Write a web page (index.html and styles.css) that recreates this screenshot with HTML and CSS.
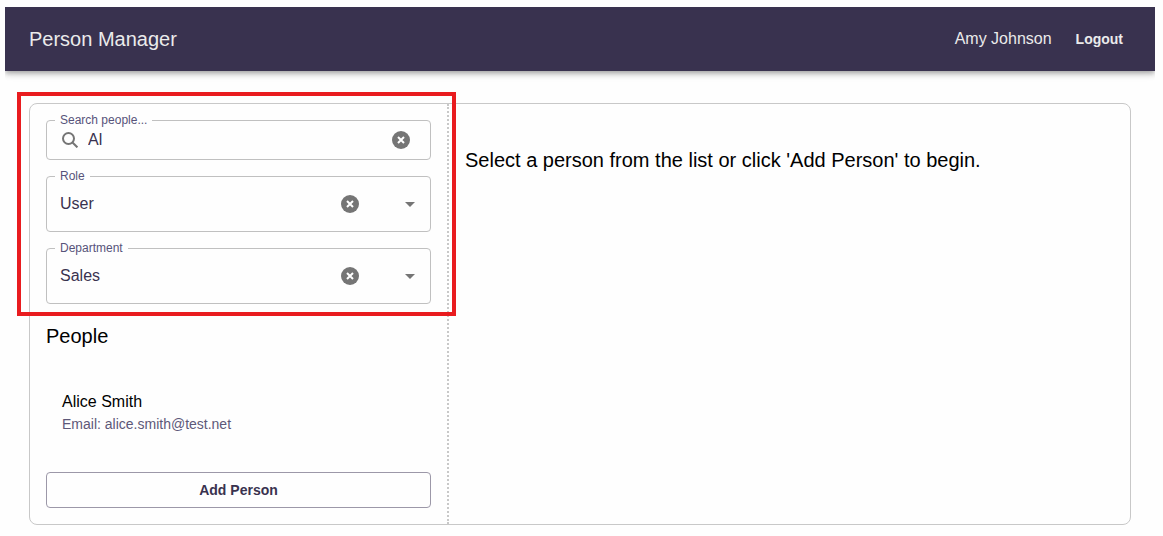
FILE: index.html
```html
<!DOCTYPE html>
<html lang="en">
<head>
<meta charset="utf-8">
<title>Person Manager</title>
<link rel="stylesheet" href="styles.css">
</head>
<body>
<header class="app-bar">
  <h1 class="app-title">Person Manager</h1>
  <span class="user-name">Amy Johnson</span>
  <button class="logout" type="button">Logout</button>
</header>
<main class="content">
  <div class="panel">
    <section class="sidebar">
      <form class="filters">
        <fieldset class="field">
          <legend class="field-legend"><label for="search">Search people...</label></legend>
          <div class="field-row search-row">
            <svg class="search-icon" viewBox="0 0 16 16" aria-hidden="true"><circle cx="6.5" cy="6.5" r="5.5"/><path d="M10.5 10.5l4.9 4.9"/></svg>
            <input class="control" id="search" type="text" value="Al">
            <button class="clear" type="button" aria-label="Clear search"><svg viewBox="0 0 18 18"><circle cx="9" cy="9" r="9"/><path class="cross" d="M6 6l6 6M12 6l-6 6"/></svg></button>
          </div>
        </fieldset>
        <fieldset class="field">
          <legend class="field-legend"><label for="role">Role</label></legend>
          <div class="field-row select-row">
            <select class="control" id="role"><option>User</option><option>Admin</option></select>
            <button class="clear" type="button" aria-label="Clear role"><svg viewBox="0 0 18 18"><circle cx="9" cy="9" r="9"/><path class="cross" d="M6 6l6 6M12 6l-6 6"/></svg></button>
            <svg class="arrow" viewBox="0 0 10 5" aria-hidden="true"><path d="M0 0h10L5 5z"/></svg>
          </div>
        </fieldset>
        <fieldset class="field">
          <legend class="field-legend"><label for="department">Department</label></legend>
          <div class="field-row select-row">
            <select class="control" id="department"><option>Sales</option><option>Support</option></select>
            <button class="clear" type="button" aria-label="Clear department"><svg viewBox="0 0 18 18"><circle cx="9" cy="9" r="9"/><path class="cross" d="M6 6l6 6M12 6l-6 6"/></svg></button>
            <svg class="arrow" viewBox="0 0 10 5" aria-hidden="true"><path d="M0 0h10L5 5z"/></svg>
          </div>
        </fieldset>
        <div class="highlight"></div>
      </form>
      <h2 class="people-title">People</h2>
      <ul class="people">
        <li class="person">
          <span class="person-name">Alice Smith</span>
          <span class="person-email">Email: alice.smith@test.net</span>
        </li>
      </ul>
      <button class="add-person" type="button">Add Person</button>
    </section>
    <section class="detail">
      <p class="prompt">Select a person from the list or click 'Add Person' to begin.</p>
    </section>
  </div>
</main>
</body>
</html>
```
FILE: styles.css
```css
* {
  box-sizing: border-box;
}

body {
  margin: 7px 8px 0 5px;
  background: #fefefe;
  color: #000;
  font-family: "Liberation Sans", Arial, sans-serif;
  font-size: 16px;
  line-height: 24px;
}

button,
input,
select {
  font: inherit;
}

.app-bar {
  display: flex;
  align-items: center;
  gap: 16px;
  min-height: 64px;
  padding: 0 24px;
  background: #39324f;
  color: #ebebeb;
  box-shadow: 0 2px 4px -1px rgba(0, 0, 0, 0.2), 0 4px 5px 0 rgba(0, 0, 0, 0.14), 0 1px 10px 0 rgba(0, 0, 0, 0.12);
}

.app-title {
  flex: 1;
  margin: 0;
  font-size: 20px;
  font-weight: 400;
  line-height: 32px;
}

.logout {
  padding: 6px 8px;
  border: 0;
  background: none;
  color: inherit;
  font-size: 14px;
  font-weight: 700;
}

.content {
  padding: 32px 24px 0;
}

.panel {
  display: grid;
  grid-template-columns: 419fr 681fr;
  border: 1px solid #c8c8c8;
  border-radius: 8px;
}

.sidebar {
  padding: 8px 16px 16px;
  border-right: 2px dotted #c8c8c8;
}

.filters {
  position: relative;
  display: flex;
  flex-direction: column;
  gap: 8px;
}

.highlight {
  position: absolute;
  inset: -20px -25px -12px -29px;
  border: 4px solid #e91c1f;
  pointer-events: none;
}

.field {
  min-width: 0;
  margin: 0;
  padding: 0 13px 0 8px;
  border: 1px solid #c0c0c0;
  border-radius: 4px;
}

.field-legend {
  padding: 0 5px;
  color: #57537a;
  font-size: 12px;
  line-height: 16px;
}

.field-row {
  display: flex;
  align-items: center;
}

.search-row {
  padding: 0 7px 7px;
}

.select-row {
  padding: 8px 2px 15px 5px;
}

.search-icon {
  width: 16px;
  height: 16px;
  margin-right: 10px;
  fill: none;
  stroke: #757575;
  stroke-width: 2;
}

.control {
  flex: 1;
  min-width: 0;
  height: 24px;
  padding: 0;
  border: 0;
  outline: 0;
  appearance: none;
  background: none;
  color: #39324f;
}

.clear {
  display: flex;
  padding: 0;
  border: 0;
  background: none;
}

.clear svg {
  width: 18px;
  height: 18px;
  fill: #757575;
}

.clear .cross {
  stroke: #fff;
  stroke-width: 2;
}

.arrow {
  width: 10px;
  height: 5px;
  margin-left: 46px;
  fill: #757575;
}

.people-title {
  margin: 16px 0;
  font-size: 20px;
  font-weight: 400;
  line-height: 32px;
}

.people {
  margin: 0 0 16px;
  padding: 8px 0;
  list-style: none;
}

.person {
  display: flex;
  flex-direction: column;
  padding: 14px 16px;
}

.person-email {
  color: #5d5879;
  font-size: 14px;
  line-height: 20px;
}

.add-person {
  display: block;
  width: 100%;
  padding: 5px 16px;
  border: 1px solid #9c98a8;
  border-radius: 4px;
  background: none;
  color: #39324f;
  font-size: 14px;
  font-weight: 700;
}

.detail {
  padding: 40px 16px;
}

.prompt {
  margin: 0;
  font-size: 20px;
  line-height: 32px;
}
```
